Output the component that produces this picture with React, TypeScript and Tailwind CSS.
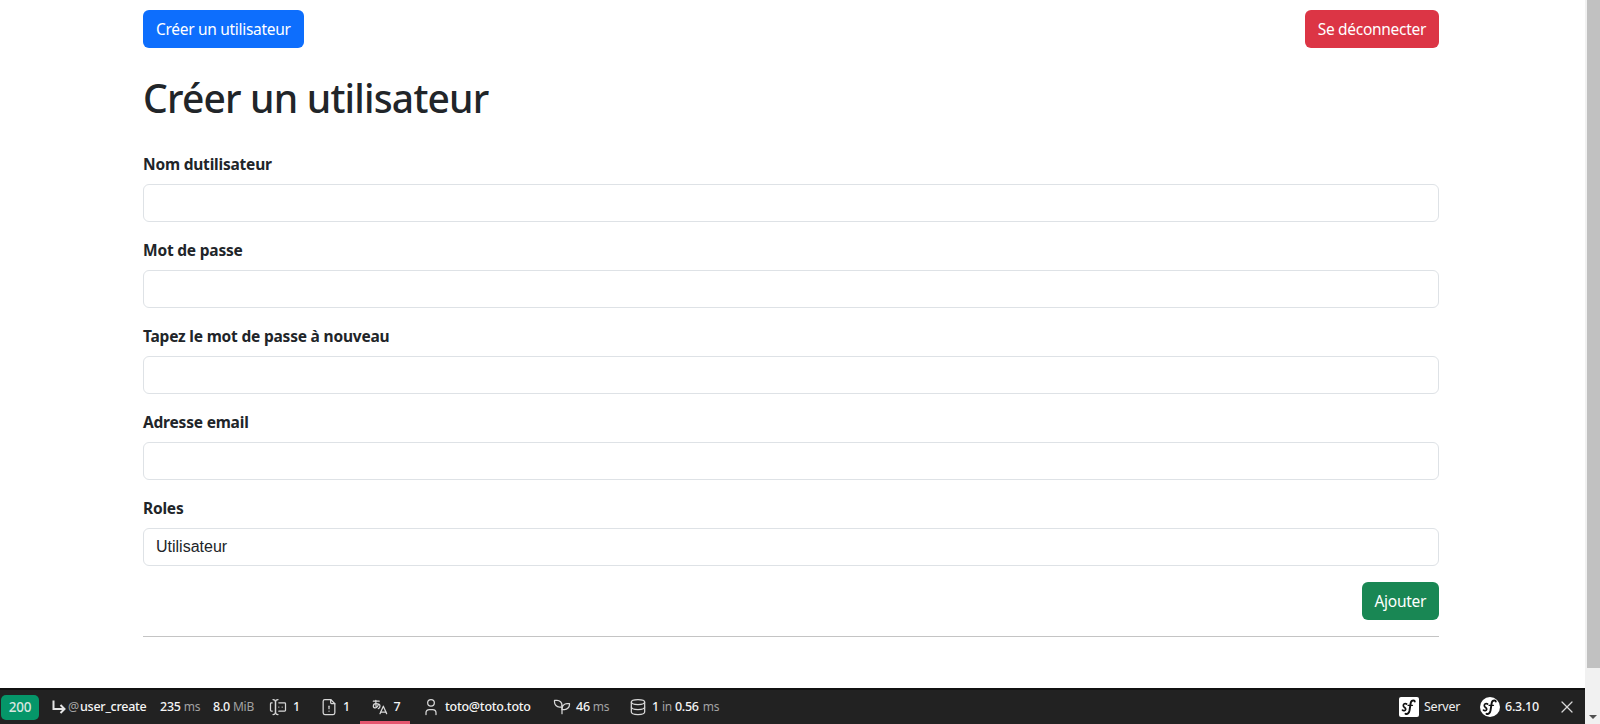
import type { FC } from "react";

const FIELDS = ["Nom dutilisateur", "Mot de passe", "Tapez le mot de passe à nouveau", "Adresse email"];

// toolbar icons, 24 unit grid
const ICONS = {
  forms: [
    "M12 3a3 3 0 0 0 -3 3v12a3 3 0 0 0 3 3",
    "M6 3a3 3 0 0 1 3 3v12a3 3 0 0 1 -3 3",
    "M13 7h7a1 1 0 0 1 1 1v8a1 1 0 0 1 -1 1h-7",
    "M5 7h-1a1 1 0 0 0 -1 1v8a1 1 0 0 0 1 1h1",
    "M17 12h.01",
    "M13 12h.01",
  ],
  fileAlert: [
    "M14 3v4a1 1 0 0 0 1 1h4",
    "M17 21h-10a2 2 0 0 1 -2 -2v-14a2 2 0 0 1 2 -2h7l5 5v11a2 2 0 0 1 -2 2z",
    "M12 17l.01 0",
    "M12 11l0 3",
  ],
  hiragana: [
    "M4 5h7",
    "M7 4c0 4.846 0 7 .5 8",
    "M10 8.500c0 2.286 -2 4.500 -3.500 4.500s-2.500 -1.135 -2.500 -2c0 -2 1 -3 3 -3s5 .57 5 2.857c0 1.524 -.667 2.571 -2 3.143",
    "M12 20l4 -9l4 9",
    "M19.100 18h-6.200",
  ],
  user: ["M8 7a4 4 0 1 0 8 0a4 4 0 0 0 -8 0", "M6 21v-2a4 4 0 0 1 4 -4h4a4 4 0 0 1 4 4v2"],
  seeding: [
    "M12 10a6 6 0 0 0 -6 -6h-3v2a6 6 0 0 0 6 6h3",
    "M12 14a6 6 0 0 1 6 -6h3v1a6 6 0 0 1 -6 6h-3",
    "M12 20l0 -10",
  ],
  database: [
    "M12 6m-8 0a8 3 0 1 0 16 0a8 3 0 1 0 -16 0",
    "M4 6v6a8 3 0 0 0 16 0v-6",
    "M4 12v6a8 3 0 0 0 16 0v-6",
  ],
  close: ["M18 6l-12 12", "M6 6l12 12"],
};

const Icon: FC<{ name: keyof typeof ICONS }> = ({ name }) => (
  <svg viewBox="0 0 24 24" className="h-5 w-5 shrink-0" fill="none" stroke="#d8d8d8" strokeWidth="1.500" strokeLinecap="round" strokeLinejoin="round">
    {ICONS[name].map((d) => (
      <path key={d} d={d} />
    ))}
  </svg>
);

// Symfony mark: s + f script strokes
const SfMark: FC<{ round?: boolean }> = ({ round }) => (
  <span className={`flex h-5 w-5 shrink-0 items-center justify-center bg-white ${round ? "rounded-full" : "rounded-[2px]"}`}>
    <svg viewBox="0 0 20 20" className="h-5 w-5" fill="none" stroke="#111" strokeLinecap="round">
      <path d="M3.500 13.200c.9.900 3 .6 3.200-.9.200-1.700-2.700-2-2.400-4 .2-1.500 2-2.100 3.300-1.300" strokeWidth="1.700" />
      <path d="M6.500 16.800c2.300.6 3.500-.8 4-3.300l1.200-7.500c.4-2 1.600-2.900 3.600-2.300" strokeWidth="1.900" />
      <path d="M9 8.300h4.500" strokeWidth="1.200" />
      <circle cx="15.800" cy="4.500" r=".9" fill="#111" stroke="none" />
    </svg>
  </span>
);

const Field: FC<{ label: string; value?: string }> = ({ label, value }) => (
  <div className="mb-4">
    <label className="mb-2 block text-[15.5px] leading-6 font-bold tracking-[-0.2px] text-[#212529]">{label}</label>
    <div className="flex h-[38px] items-center rounded-md border border-[#dee2e6] bg-white px-3 font-['Liberation_Sans',sans-serif] text-base text-[#212529]">
      {value}
    </div>
  </div>
);

const Metric: FC<{ value: string; unit: string }> = ({ value, unit }) => (
  <span className="flex items-baseline gap-[3px]">
    <span className="font-medium text-[#f5f5f5]">{value}</span>
    <span className="text-[12px] text-[#a3a3a3]">{unit}</span>
  </span>
);

const btn = "h-[38px] rounded-md px-[13px] pt-[1px] text-[15.5px] tracking-[-0.3px] text-white";

export default function App() {
  return (
    <div className="flex h-screen overflow-hidden bg-white font-['Noto_Sans',sans-serif]">
      <div className="flex min-w-0 flex-1 flex-col">
        <main className="min-h-0 flex-1 pt-[10px] pr-[146px] pl-[143px]">
          <div className="flex justify-between">
            <button className={`${btn} bg-[#0d6efd]`}>Créer un utilisateur</button>
            <button className={`${btn} bg-[#dc3545]`}>Se déconnecter</button>
          </div>
          <h1 className="mt-[26px] mb-[30px] text-[39px] leading-[48px] font-medium tracking-[-0.8px] text-[#212529]">Créer un utilisateur</h1>
          {FIELDS.map((f) => (
            <Field key={f} label={f} />
          ))}
          <Field label="Roles" value="Utilisateur" />
          <div className="flex justify-end">
            <button className={`${btn} bg-[#198754]`}>Ajouter</button>
          </div>
          <hr className="mt-4 border-t border-[#c4c4c4]" />
        </main>

        <footer className="flex h-[36px] shrink-0 items-center justify-between border-t-2 border-[#111] bg-[#222] text-[12.5px] tracking-[-0.25px] text-[#f5f5f5]">
          <div className="flex h-full items-center">
            <div className="w-[51px] pl-[1px]">
              <span className="flex h-[25px] w-[38px] items-center justify-center rounded-[5px] bg-[#059669] text-[13.5px] font-medium text-[#d8e6e0]">200</span>
            </div>
            <div className="flex w-[109px] items-center">
              <svg viewBox="0 0 16 16" className="h-4 w-4 shrink-0" fill="none" stroke="#e5e5e5" strokeWidth="2">
                <path d="M2.500 1.500v8.500h11M9.500 6 13.500 10l-4 4" />
              </svg>
              <span className="ml-[1px] text-[#a3a3a3]">@</span>
              <span className="ml-[1px] font-medium">user_create</span>
            </div>
            <div className="w-[53px]"><Metric value="235" unit="ms" /></div>
            <div className="w-[55px]"><Metric value="8.0" unit="MiB" /></div>
            <div className="flex w-[51px] items-center gap-[5px]">
              <Icon name="forms" />
              <span className="font-medium">1</span>
            </div>
            <div className="flex w-[41px] items-center gap-[4px]">
              <Icon name="fileAlert" />
              <span className="font-medium">1</span>
            </div>
            <div className="relative flex h-full w-[50px] items-center justify-center gap-[4px]">
              <Icon name="hiragana" />
              <span className="font-medium">7</span>
              <span className="absolute right-0 bottom-0 left-0 h-[3px] bg-[#e5566f]" />
            </div>
            <div className="ml-[11px] flex w-[131px] items-center gap-[4px]">
              <Icon name="user" />
              <span className="font-medium">toto@toto.toto</span>
            </div>
            <div className="flex w-[76px] items-center gap-[4px]">
              <Icon name="seeding" />
              <Metric value="46" unit="ms" />
            </div>
            <div className="flex items-center gap-[4px]">
              <Icon name="database" />
              <span className="flex items-baseline gap-[3px]">
                <span className="font-medium">1</span>
                <span className="text-[12px] text-[#a3a3a3]">in</span>
                <span className="font-medium">0.56</span>
                <span className="ml-[1px] text-[12px] text-[#a3a3a3]">ms</span>
              </span>
            </div>
          </div>
          <div className="flex h-full items-center">
            <SfMark />
            <span className="ml-[5px] w-[56px] text-[#f0f0f0]">Server</span>
            <SfMark round />
            <span className="ml-[5px] w-[52px] font-medium">6.3.10</span>
            <div className="mr-[8px]"><Icon name="close" /></div>
          </div>
        </footer>
      </div>

      <aside className="flex w-[15px] shrink-0 flex-col bg-[#f1f1f1] pl-[2px]">
        <div className="h-[668px] bg-[#c1c1c1]" />
        <div className="mt-auto mb-[5px] ml-[2px] h-0 w-0 border-x-[4px] border-t-[4px] border-x-transparent border-t-[#505050]" />
      </aside>
    </div>
  );
}
